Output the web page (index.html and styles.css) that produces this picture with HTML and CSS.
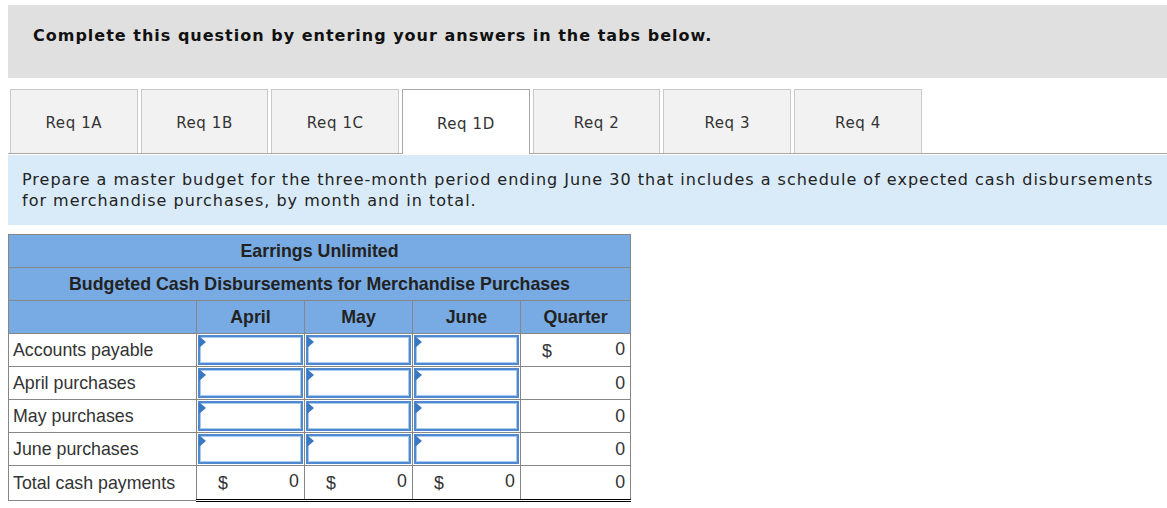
FILE: index.html
```html
<!DOCTYPE html>
<html>
<head>
<meta charset="utf-8">
<link rel="stylesheet" href="styles.css">
</head>
<body>
<div class="banner">Complete this question by entering your answers in the tabs below.</div>
<div class="tabs">
  <div class="tab">Req 1A</div>
  <div class="tab">Req 1B</div>
  <div class="tab">Req 1C</div>
  <div class="tab active">Req 1D</div>
  <div class="tab">Req 2</div>
  <div class="tab">Req 3</div>
  <div class="tab">Req 4</div>
</div>
<div class="instructions">Prepare a master budget for the three-month period ending June 30 that includes a schedule of expected cash disbursements for merchandise purchases, by month and in total.</div>
<table class="budget">
  <colgroup>
    <col class="c-label"><col class="c-num"><col class="c-num"><col class="c-num"><col class="c-q">
  </colgroup>
  <tr class="head"><th colspan="5">Earrings Unlimited</th></tr>
  <tr class="head"><th colspan="5">Budgeted Cash Disbursements for Merchandise Purchases</th></tr>
  <tr class="head"><th></th><th>April</th><th>May</th><th>June</th><th>Quarter</th></tr>
  <tr>
    <td class="label">Accounts payable</td>
    <td class="in"><div class="box"></div></td>
    <td class="in"><div class="box"></div></td>
    <td class="in"><div class="box"></div></td>
    <td class="val"><span class="cur">$</span><span>0</span></td>
  </tr>
  <tr>
    <td class="label">April purchases</td>
    <td class="in"><div class="box"></div></td>
    <td class="in"><div class="box"></div></td>
    <td class="in"><div class="box"></div></td>
    <td class="val"><span></span><span>0</span></td>
  </tr>
  <tr>
    <td class="label">May purchases</td>
    <td class="in"><div class="box"></div></td>
    <td class="in"><div class="box"></div></td>
    <td class="in"><div class="box"></div></td>
    <td class="val"><span></span><span>0</span></td>
  </tr>
  <tr>
    <td class="label">June purchases</td>
    <td class="in"><div class="box"></div></td>
    <td class="in"><div class="box"></div></td>
    <td class="in"><div class="box"></div></td>
    <td class="val"><span></span><span>0</span></td>
  </tr>
  <tr class="total">
    <td class="label">Total cash payments</td>
    <td class="val"><span class="cur">$</span><span>0</span></td>
    <td class="val"><span class="cur">$</span><span>0</span></td>
    <td class="val"><span class="cur">$</span><span>0</span></td>
    <td class="val"><span></span><span>0</span></td>
  </tr>
</table>
</body>
</html>
```
FILE: styles.css
```css
html, body {
  margin: 0;
  padding: 0;
  background: #fff;
}
body {
  padding: 5px 0 0 8px;
  font-family: "DejaVu Sans", Verdana, sans-serif;
  color: #222;
}
.banner {
  background: #e0e0e0;
  height: 73px;
  box-sizing: border-box;
  padding: 21px 0 0 25px;
  font-weight: bold;
  font-size: 16px;
  letter-spacing: 1px;
  line-height: 20px;
  color: #111;
}
.tabs {
  margin-top: 11px;
  display: flex;
  align-items: flex-start;
  gap: 3px;
  padding-left: 2px;
  height: 64px;
  border-bottom: 1px solid #a8a8a8;
}
.tab {
  width: 127.7px;
  height: 64px;
  box-sizing: border-box;
  border: 1px solid #c9c9c9;
  border-bottom: none;
  background: #f2f2f2;
  display: flex;
  align-items: center;
  justify-content: center;
  font-size: 15px;
  letter-spacing: 0.6px;
  color: #333;
  padding-top: 3px;
}
.tab.active {
  background: #fff;
  height: 65px;
  border-color: #a8a8a8;
  position: relative;
  z-index: 1;
}
.instructions {
  margin-top: 1px;
  background: #d9ebf9;
  box-sizing: border-box;
  height: 70px;
  padding: 14px 3px 0 14px;
  font-size: 16px;
  letter-spacing: 1px;
  line-height: 21px;
  color: #222;
}
.budget {
  margin-top: 9px;
  border-collapse: collapse;
  width: 622px;
  table-layout: fixed;
  font-family: "Liberation Sans", Arial, sans-serif;
  font-size: 17.8px;
  color: #222;
}
.c-label { width: 188px; }
.c-num { width: 108px; }
.c-q { width: 110px; }
.budget th, .budget td {
  border: 1px solid #868686;
  height: 33px;
  padding: 0;
  box-sizing: border-box;
}
.head th {
  background: #78abe3;
  font-weight: bold;
  text-align: center;
  color: #222;
}
.label {
  padding-left: 4px !important;
  text-align: left;
  color: #333;
}
.in {
  padding: 1px !important;
}
.box {
  position: relative;
  height: 30px;
  box-sizing: border-box;
  border: 2px solid #4f8ad0;
  box-shadow: inset 0 0 0 1px #a9c9ee;
  background: #fff;
}
.box::before {
  content: "";
  position: absolute;
  left: -1px;
  top: -1px;
  border-left: 7px solid #3b78c2;
  border-top: 6px solid transparent;
  border-bottom: 6px solid transparent;
}
.val {
  padding: 0 5px 0 21px !important;
  color: #333;
  text-align: right;
}
.val span {
  display: inline-block;
}
.val .cur {
  float: left;
  margin-top: 2px;
}
.total td {
  height: 35px;
}
.total td.val {
  border-top: 1px solid #000;
  border-bottom: 3px double #000;
}
```
